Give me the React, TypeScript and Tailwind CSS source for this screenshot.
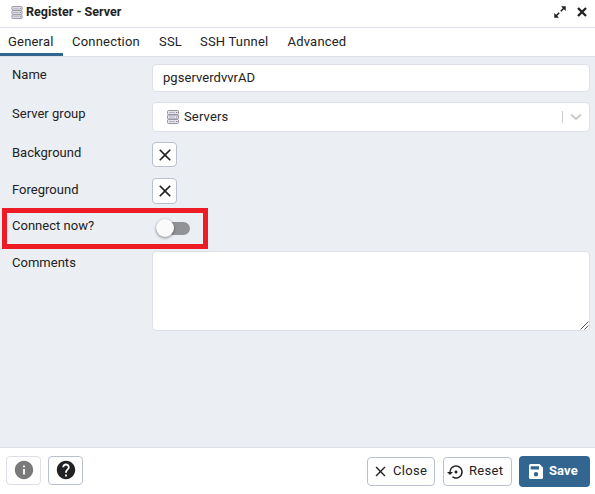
import React from "react";
import { MdClose, MdHelp, MdInfo, MdSettingsBackupRestore } from "react-icons/md";

function ServersIcon({ className }: { className: string }) {
  return (
    <svg viewBox="0 0 12 14" className={className}>
      {[0.5, 5, 9.5].map((y) => (
        <g key={y}>
          <rect x="0.5" y={y} width="11" height="4" rx="1" fill="#e6e5ea" stroke="#96939f" />
          <path d={`M2 ${y + 2}h6`} stroke="#b5b1c4" />
          <path d={`M9 ${y + 2}h1.3`} stroke="#85818f" />
        </g>
      ))}
    </svg>
  );
}

function SaveIcon() {
  return (
    <svg viewBox="0 0 14 15" className="size-[15px] w-[14px]">
      <path
        fill="currentColor"
        fillRule="evenodd"
        d="M1.5 0h9L14 3.5v10a1.5 1.5 0 0 1-1.5 1.5h-11A1.5 1.5 0 0 1 0 13.500v-12A1.5 1.500 0 0 1 1.5 0zM1.700 2.200v3.300h8.300V2.200zM7 8a2.200 2.200 0 1 0 0 4.400A2.200 2.200 0 0 0 7 8z"
      />
    </svg>
  );
}

const tabs = [
  { label: "General", style: "w-[63px] pl-2 border-[#326690]" },
  { label: "Connection", style: "w-[87px] pl-[9px] border-transparent" },
  { label: "SSL", style: "w-[41px] pl-[9px] border-transparent" },
  { label: "SSH Tunnel", style: "w-[88px] pl-[9px] border-transparent" },
  { label: "Advanced", style: "w-[76px] pl-[8.500px] border-transparent" },
];

type RowProps = { label: string; height: string; offset?: string; children: React.ReactNode };

function Row({ label, height, offset = "pt-1", children }: RowProps) {
  return (
    <div className={`flex ${height}`}>
      <div className={`w-[152px] shrink-0 pl-3 ${offset} leading-4 tracking-[0.020px]`}>{label}</div>
      {children}
    </div>
  );
}

function ClearButton({ height }: { height: string }) {
  return (
    <button className={`flex w-[25px] ${height} items-center justify-center rounded-[4px] border border-[#bac1cd] bg-white`}>
      <MdClose className="size-5" />
    </button>
  );
}

export default function App() {
  return (
    <div className="flex h-[494px] w-[595px] flex-col overflow-hidden bg-white font-['Roboto',sans-serif] text-[13px] tracking-[0.14px] text-[#222]">
      <header className="flex h-7 shrink-0 items-center border-b border-[#dde0e6] pb-[3px] pl-[11px] pr-2">
        <ServersIcon className="mt-px h-[13px] w-3" />
        <h1 className="ml-[3px] text-[12.5px] font-bold tracking-[0.020px]">Register - Server</h1>
        <svg viewBox="0 0 12 12" className="-mt-px ml-auto mr-[-1px] size-3" fill="#222" stroke="#222">
          <path d="M7.500.5h4v4zM.5 7.500v4h4z" strokeWidth=".5" />
          <path d="M10 2L6.800 5.200M5.200 6.800L2 10" strokeWidth="1.600" />
        </svg>
        <svg viewBox="0 0 10 10" className="-mt-px ml-3 size-[10px]" stroke="#222" strokeWidth="2.400">
          <path d="M1 1l8 8M9 1L1 9" />
        </svg>
      </header>

      <nav className="flex h-[29px] shrink-0 border-b border-[#dde0e6]">
        {tabs.map((tab) => (
          <div key={tab.label} className={`${tab.style} whitespace-nowrap border-b-3 pt-[6px] leading-4 tracking-[0.2px]`}>
            {tab.label}
          </div>
        ))}
      </nav>

      <main className="flex-1 bg-[#ebeef3] pt-[7px]">
        <Row label="Name" height="h-[38px]" offset="pt-[3px]">
          <div className="flex h-7 w-[438px] items-center rounded-[4px] border border-[#dde0e6] bg-white pl-[10px] tracking-[0.050px]">
            pgserverdvvrAD
          </div>
        </Row>
        <Row label="Server group" height="h-10">
          <div className="flex h-[30px] w-[438px] items-center rounded-[4px] border border-[#dde0e6] bg-white pl-[14px] pr-[7px]">
            <ServersIcon className="h-[14px] w-3" />
            <span className="ml-[5px]">Servers</span>
            <span className="ml-auto h-3 w-px bg-[#ccc]" />
            <svg viewBox="0 0 12 8" className="ml-[7px] h-2 w-3" fill="none" stroke="#ccc" strokeWidth="2">
              <path d="M1 1.500l5 4.500 5-4.500" />
            </svg>
          </div>
        </Row>
        <Row label="Background" height="h-9" offset="pt-[3px]">
          <ClearButton height="h-[25px]" />
        </Row>
        <div className="relative">
          <Row label="Foreground" height="h-9">
            <ClearButton height="h-[26px]" />
          </Row>
          <Row label="Connect now?" height="h-[37px]">
            <div className="mt-1 flex h-5 w-[38px] items-center pl-1">
              <span className="z-10 size-[18px] shrink-0 rounded-full bg-[#fafafa] shadow-[0_1px_3px_rgba(0,0,0,0.45)]" />
              <span className="-ml-[18px] h-[13px] w-[34px] shrink-0 rounded-full bg-[#929397]" />
            </div>
          </Row>
          <div className="absolute left-[2px] top-[30px] h-[41px] w-[206px] border-5 border-[#ed1c24]" />
        </div>
        <Row label="Comments" height="h-20">
          <div className="flex w-[438px] items-end justify-end rounded-[4px] border border-[#dde0e6] bg-white">
            <svg viewBox="0 0 9 9" className="size-[9px]" stroke="#555">
              <path d="M.5 8.500l8-8M4.500 8.500l4-4" />
            </svg>
          </div>
        </Row>
      </main>

      <footer className="flex h-[47px] shrink-0 items-start border-t border-[#dde0e6] pl-[6px] pr-[5px] pt-2 tracking-[0.3px]">
        <button className="flex h-[29px] w-[35px] items-center justify-center rounded-[4px] border border-[#dcdfe5]">
          <MdInfo className="-mt-px size-[22px] text-[#7a7a7a]" />
        </button>
        <button className="ml-[7px] flex h-[29px] w-[35px] items-center justify-center rounded-[4px] border border-[#bac1cd]">
          <MdHelp className="-mt-px size-[22px]" />
        </button>
        <button className="ml-auto mt-px flex h-[29px] w-[68px] items-center rounded-[4px] border border-[#bac1cd] pl-[4px]">
          <MdClose className="size-[17px]" />
          <span className="-mt-[2px] ml-1">Close</span>
        </button>
        <button className="ml-2 mt-px flex h-[29px] w-[69px] items-center rounded-[4px] border border-[#bac1cd] pl-[3px]">
          <MdSettingsBackupRestore className="size-[18px]" />
          <span className="-mt-[2px] ml-1">Reset</span>
        </button>
        <button className="ml-[7px] flex h-[31px] w-[71px] items-center rounded-[4px] bg-[#326690] pl-[10px] font-bold text-white">
          <SaveIcon />
          <span className="-mt-[2px] ml-[6px] tracking-[0.1px]">Save</span>
        </button>
      </footer>
    </div>
  );
}
